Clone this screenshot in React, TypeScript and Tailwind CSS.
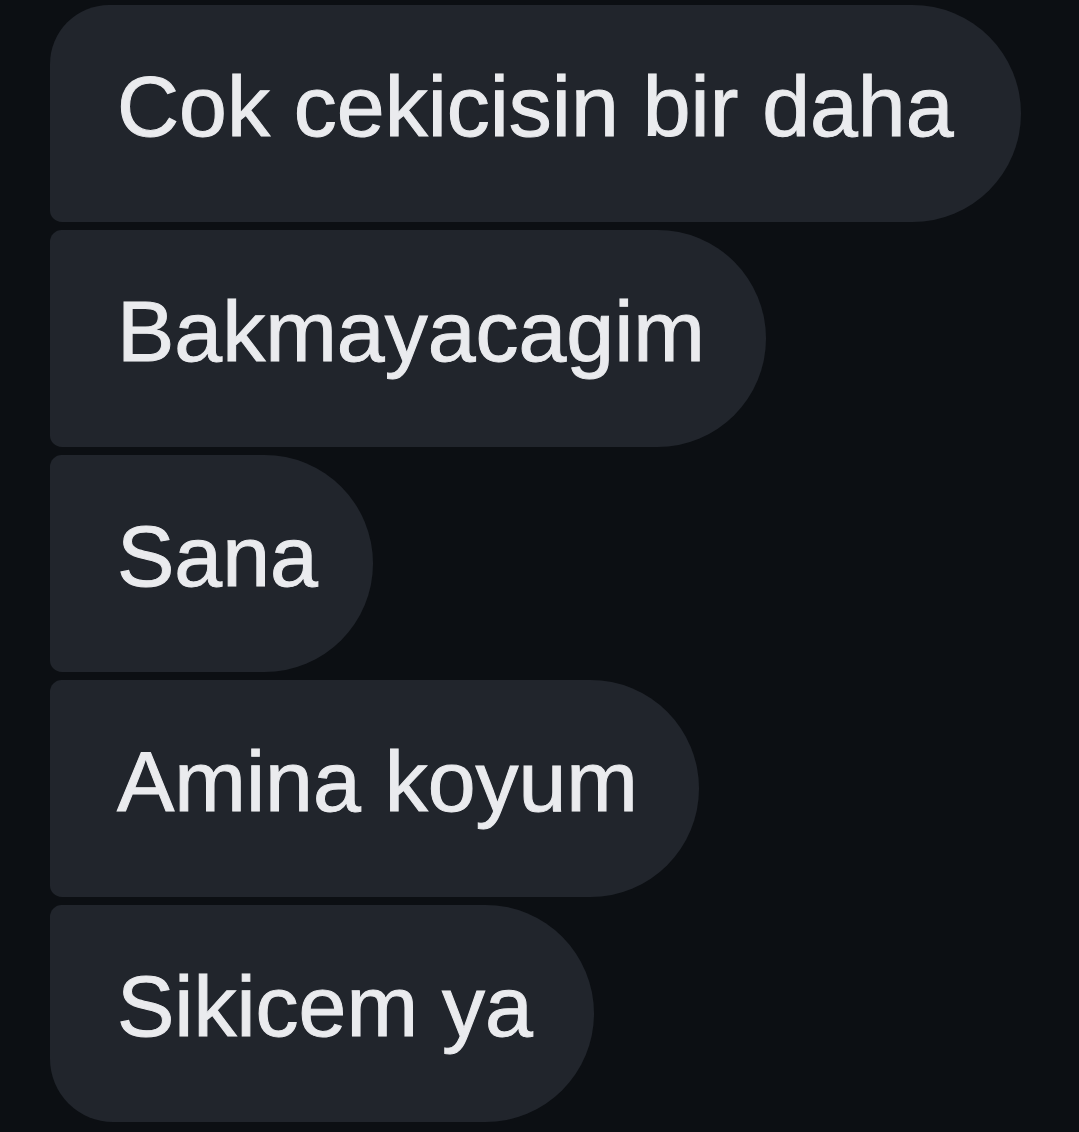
import React from "react";

const messages = [
  { text: "Cok cekicisin bir daha", cls: "rounded-tl-[60px] rounded-bl-[12px] pr-[68px]" },
  { text: "Bakmayacagim", cls: "rounded-tl-[12px] rounded-bl-[12px] pr-[61px]" },
  { text: "Sana", cls: "rounded-tl-[12px] rounded-bl-[12px] pr-[55px]" },
  { text: "Amina koyum", cls: "rounded-tl-[12px] rounded-bl-[12px] pr-[61px]" },
  { text: "Sikicem ya", cls: "rounded-tl-[12px] rounded-bl-[64px] pr-[61px]" },
];

export default function App() {
  return (
    <div
      className="min-h-screen w-full bg-[#0c0f13] pt-[5px] pl-[50px]"
      style={{ fontFamily: '"Liberation Sans", Arial, sans-serif' }}
    >
      <div className="flex flex-col items-start gap-[8px]">
        {messages.map((m) => (
          <div
            key={m.text}
            className={`h-[217px] bg-[#21252c] pl-[67px] pt-[58px] rounded-r-[110px] ${m.cls}`}
          >
            <span className="block whitespace-nowrap text-[86px] leading-none text-[#eaebee] [-webkit-text-stroke:1px_#eaebee]">
              {m.text}
            </span>
          </div>
        ))}
      </div>
    </div>
  );
}
